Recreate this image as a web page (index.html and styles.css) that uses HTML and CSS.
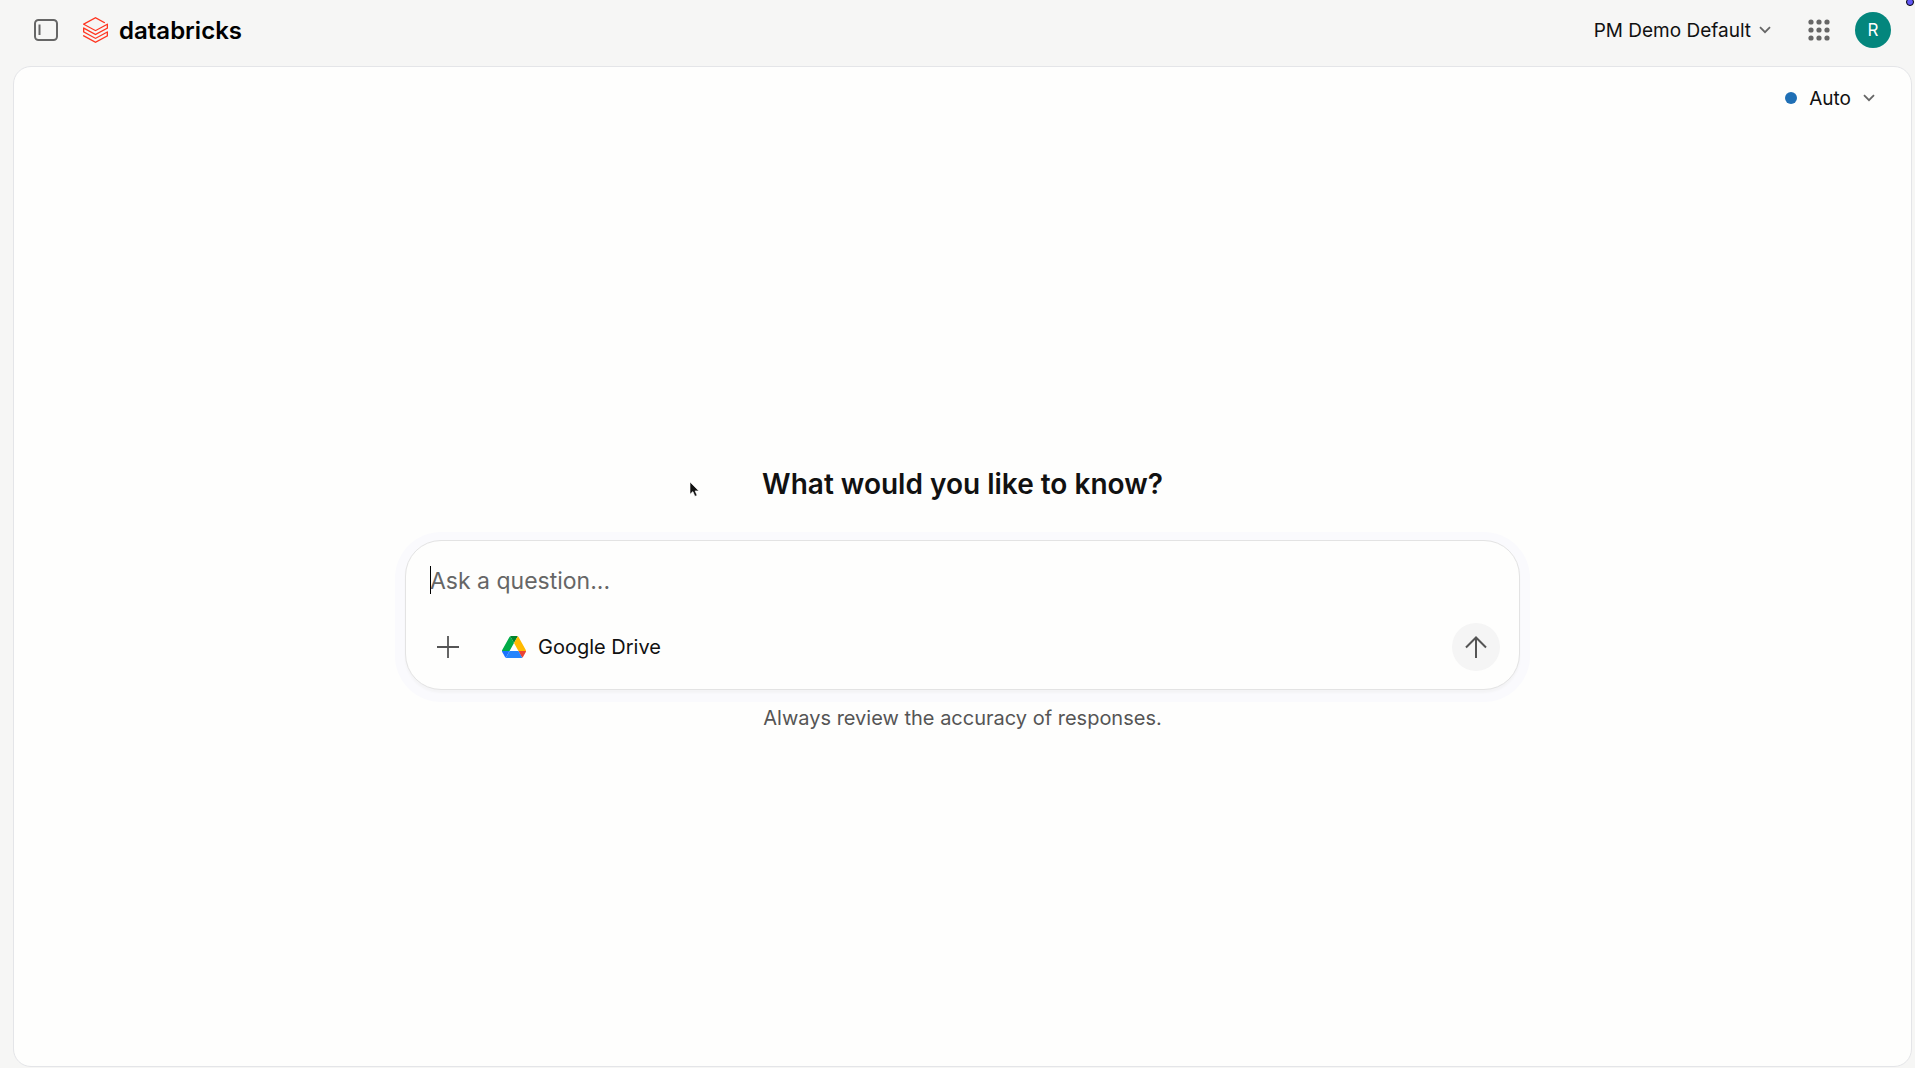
FILE: index.html
```html
<!DOCTYPE html>
<html lang="en">
<head>
    <meta charset="UTF-8">
    <meta name="viewport" content="width=device-width, initial-scale=1.0">
    <title>Databricks</title>
    <link rel="stylesheet" href="styles.css">
</head>
<body>
    <header class="topbar">
        <button class="icon-button" type="button" aria-label="Toggle sidebar">
            <svg width="24" height="22" viewBox="0 0 24 22" fill="none" stroke="#666">
                <rect x="1" y="1" width="22" height="20" rx="3.5" stroke-width="2"/>
                <path d="M5.5 5.5v10.5" stroke-width="2"/>
            </svg>
        </button>
        <a class="brand" href="#">
            <svg width="25" height="26" viewBox="0.95 0 22.1 24" preserveAspectRatio="none" fill="#ff3621">
                <path d="M.95 14.184L12 20.403l9.919-5.55v2.21L12 22.662l-10.484-5.96-.565.308v.77L12 24l11.05-6.218v-4.317l-.515-.309L12 19.118l-9.867-5.653v-2.21L12 16.805l11.05-6.218V6.32l-.515-.308L12 11.974 2.647 6.681 12 1.388l7.76 4.368.668-.411v-.566L12 0 .95 6.27v.72L12 13.207l9.919-5.55v2.26L12 15.52 1.516 9.56l-.565.308z"/>
            </svg>
            <span class="brand-name">databricks</span>
        </a>
        <div class="topbar-right">
            <button class="workspace" type="button">
                PM Demo Default
                <svg width="12" height="8" viewBox="0 0 12 8" fill="none" stroke="#666" stroke-width="1.8">
                    <path d="M1 1.2l5 5 5-5"/>
                </svg>
            </button>
            <button class="icon-button" type="button" aria-label="Apps">
                <svg width="22" height="22" viewBox="0 0 22 22" fill="#666">
                    <circle cx="3" cy="3" r="2.6"/><circle cx="11" cy="3" r="2.6"/><circle cx="19" cy="3" r="2.6"/>
                    <circle cx="3" cy="11" r="2.6"/><circle cx="11" cy="11" r="2.6"/><circle cx="19" cy="11" r="2.6"/>
                    <circle cx="3" cy="19" r="2.6"/><circle cx="11" cy="19" r="2.6"/><circle cx="19" cy="19" r="2.6"/>
                </svg>
            </button>
            <button class="avatar" type="button" aria-label="Account">R</button>
        </div>
        <span class="record-dot"></span>
    </header>

    <main class="panel">
        <div class="panel-bar">
            <button class="mode" type="button">
                <span class="mode-dot"></span>
                Auto
                <svg width="12" height="8" viewBox="0 0 12 8" fill="none" stroke="#666" stroke-width="1.8">
                    <path d="M1 1.2l5 5 5-5"/>
                </svg>
            </button>
        </div>

        <div class="ask">
            <h1>What would you like to know?</h1>
            <form class="composer">
                <div class="question">
                    <textarea rows="1" aria-label="Ask a question" placeholder="Ask a question..."></textarea>
                </div>
                <div class="composer-row">
                    <button class="icon-button" type="button" aria-label="Add">
                        <svg width="22" height="22" viewBox="0 0 22 22" stroke="#555" stroke-width="1.8">
                            <path d="M11 0v22M0 11h22"/>
                        </svg>
                    </button>
                    <button class="source" type="button">
                        <svg width="24" height="22" viewBox="0 0 87.3 78" preserveAspectRatio="none">
                            <path fill="#1a73ff" d="M6.6 66.85l3.85 6.65c.8 1.4 1.95 2.5 3.3 3.3L27.5 53H0c0 1.55.4 3.1 1.2 4.5z"/>
                            <path fill="#00ac47" d="M43.65 25L29.9 1.2c-1.35.8-2.5 1.9-3.3 3.3l-25.4 44A9.06 9.06 0 0 0 0 53h27.5z"/>
                            <path fill="#ea4335" d="M73.55 76.8c1.35-.8 2.5-1.9 3.3-3.3l1.6-2.75L86.1 57.5c.8-1.4 1.2-2.95 1.2-4.5H59.8l5.85 11.5z"/>
                            <path fill="#00832d" d="M43.65 25L57.4 1.2C56.05.4 54.5 0 52.9 0H34.4c-1.6 0-3.15.45-4.5 1.2z"/>
                            <path fill="#2684fc" d="M59.8 53H27.5L13.75 76.8c1.35.8 2.9 1.2 4.5 1.2h50.8c1.6 0 3.15-.45 4.5-1.2z"/>
                            <path fill="#ffba00" d="M73.4 26.5L60.7 4.5c-.8-1.4-1.95-2.5-3.3-3.3L43.65 25 59.8 53h27.45c0-1.55-.4-3.1-1.2-4.5z"/>
                        </svg>
                        Google Drive
                    </button>
                    <button class="send" type="submit" aria-label="Send">
                        <svg width="22" height="22" viewBox="0 0 22 22" fill="none" stroke="#555" stroke-width="2">
                            <path d="M11 22V1.5M1 11.5l10-10 10 10"/>
                        </svg>
                    </button>
                </div>
            </form>
            <p class="note">Always review the accuracy of responses.</p>
        </div>
    </main>

    <svg class="pointer" width="11" height="17" viewBox="0 0 11 17">
        <path d="M1 1v12.2l2.9-2.6 2 4.7 2.2-.9-2-4.5h3.7z" fill="#111" stroke="#fff" stroke-width=".6"/>
    </svg>
</body>
</html>
```
FILE: styles.css
```css
* {
    box-sizing: border-box;
}
body {
    margin: 0;
    min-height: 100vh;
    display: flex;
    flex-direction: column;
    background-color: #f6f6f5;
    color: #111;
    font-family: Inter, "Liberation Sans", sans-serif;
    font-size: 19px;
}
button {
    display: flex;
    align-items: center;
    justify-content: center;
    padding: 0;
    border: none;
    background: none;
    color: inherit;
    font: inherit;
    cursor: pointer;
}
.topbar {
    position: relative;
    display: flex;
    align-items: center;
    height: 66px;
    padding: 0 24px 6px 28px;
}
.icon-button {
    width: 36px;
    height: 36px;
}
.brand {
    display: flex;
    align-items: center;
    gap: 11px;
    margin-left: 19px;
    color: #000;
    text-decoration: none;
}
.brand-name {
    font-size: 24px;
    font-weight: 600;
}
.topbar-right {
    display: flex;
    align-items: center;
    margin-left: auto;
}
.workspace {
    gap: 8px;
    margin-right: 30px;
}
.avatar {
    width: 36px;
    height: 36px;
    margin-left: 18px;
    border-radius: 50%;
    background-color: #04867d;
    color: #fff;
    font-size: 17px;
}
.record-dot {
    position: absolute;
    top: -2px;
    right: 1px;
    width: 8px;
    height: 8px;
    border: 1px solid #000;
    border-radius: 50%;
    background-color: #6258f5;
}
.panel {
    flex: 1;
    display: flex;
    flex-direction: column;
    margin: 0 3px 1px 13px;
    border: 1px solid #e4e5e8;
    border-radius: 18px;
    background-color: #fefefd;
}
.panel-bar {
    display: flex;
    justify-content: flex-end;
    padding: 16px 36px 17px;
}
.mode {
    height: 30px;
    gap: 12px;
}
.mode-dot {
    width: 12px;
    height: 12px;
    border-radius: 50%;
    background-color: #1f6fb5;
}
.ask {
    flex: 1;
    display: flex;
    flex-direction: column;
    align-items: center;
    justify-content: center;
    padding: 0 24px;
}
h1 {
    margin: 0 0 36px;
    font-size: 28px;
    font-weight: 600;
    line-height: 40px;
}
.composer {
    width: 100%;
    max-width: 1115px;
    padding: 22px 19px 18px 24px;
    border: 1px solid #e3e3e3;
    border-radius: 36px;
    background-color: #fefefd;
    box-shadow: 0 3px 2px #f4f4f6, 0 2px 0 10px #fafafd;
}
.question {
    position: relative;
    display: flex;
}
/* text caret */
.question::before {
    content: "";
    position: absolute;
    top: 3px;
    left: 0;
    width: 1px;
    height: 28px;
    background-color: #000;
}
.question textarea {
    flex: 1;
    height: 36px;
    padding: 0;
    border: none;
    outline: none;
    resize: none;
    background: none;
    color: #111;
    font: inherit;
    font-size: 23px;
    line-height: 36px;
}
.question textarea::placeholder {
    color: #666;
    opacity: 1;
}
.composer-row {
    display: flex;
    align-items: center;
    margin-top: 24px;
}
.source {
    gap: 12px;
    margin-left: 36px;
    font-size: 20px;
}
.send {
    width: 48px;
    height: 48px;
    margin-left: auto;
    border-radius: 50%;
    background-color: #f5f5f5;
}
.note {
    margin: 13px 0 0;
    color: #555;
    font-size: 20px;
    line-height: 30px;
}
/* mouse pointer drawn over the page */
.pointer {
    position: absolute;
    top: 481px;
    left: 689px;
}
```
